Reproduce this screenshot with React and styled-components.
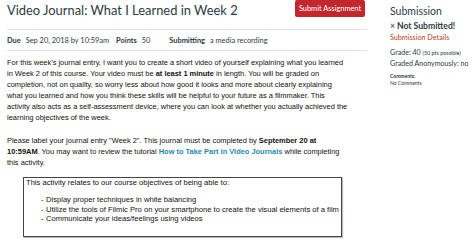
import React from 'react';
import styled, { createGlobalStyle } from 'styled-components';

const GlobalStyle = createGlobalStyle`
	* { box-sizing: border-box; }
	body {
		margin: 0;
		background: #fff;
		font-family: Lato, "Liberation Sans", sans-serif;
		color: #2d3b45;
	}
`;

/**
 * Page frame: assignment column + submission sidebar
 */
const Page = styled.div`
	display: flex;
	width: 474px;
	height: 241px;
	overflow: hidden;
`;

const Main = styled.main`
	width: 367px;
	padding-left: 7px;
	flex-shrink: 0;
`;

const Header = styled.header`
	display: flex;
	justify-content: space-between;
	align-items: flex-start;
	height: 30px;
	border-bottom: 1px solid #dfe3e6;
`;

const Title = styled.h1`
	margin: 0;
	font-size: 12.9px;
	font-weight: 400;
	line-height: 20px;
	white-space: nowrap;
`;

const SubmitButton = styled.button`
	margin-right: 2px;
	width: 70px;
	height: 17px;
	padding: 0;
	border: none;
	border-radius: 2px;
	background: #c4262e;
	color: #fff;
	font-family: Lato, sans-serif;
	font-size: 7.4px;
	line-height: 17px;
`;

const Meta = styled.div`
	display: flex;
	align-items: center;
	height: 21px;
	border-bottom: 1px solid #dfe3e6;
	font-size: 7.4px;
`;

const MetaItem = styled.span`
	margin-right: ${props => props.gap}px;
	white-space: nowrap;
`;

const Label = styled.b`
	font-weight: 700;
	margin-right: 5px;
`;

const Body = styled.section`
	width: 380px;
	padding-top: 5.5px;
	font-family: "Liberation Sans", Arial, sans-serif;
	font-size: 7.45px;
	line-height: 11px;
	color: #111;
	white-space: nowrap;
`;

const Para = styled.p`
	margin: 0 0 ${props => props.after}px;
`;

const Link = styled.a`
	color: #1f8ab5;
	font-weight: 700;
	text-decoration: none;
`;

const Objectives = styled.div`
	margin-left: 16px;
	width: 319px;
	padding: 0 2px 12px;
	border: 1px solid #444;
	box-shadow: 1px 1px 1px #bbb;
	font-size: 7.6px;
	line-height: 9.8px;
`;

const List = styled.ul`
	margin: 7.4px 0 0;
	padding-left: 20px;
	list-style: none;
	line-height: 9.6px;
`;

const Item = styled.li`
	&::before {
		content: "-";
		display: inline-block;
		width: 5px;
		margin-left: -5px;
	}
`;

const Sidebar = styled.aside`
	padding: 3px 0 0 23px;
	width: 107px;
	font-size: 7.1px;
	white-space: nowrap;
`;

const SideTitle = styled.h2`
	margin: 0;
	font-size: 10.5px;
	font-weight: 400;
	line-height: 16px;
`;

const Status = styled.div`
	font-size: 8.6px;
	font-weight: 700;
	line-height: 12px;
	margin-top: 1px;
`;

const Cross = styled.span`
	font-weight: 400;
	margin-right: 2px;
`;

const Details = styled.div`
	color: #c23c2d;
	font-size: 7.2px;
	line-height: 11px;
	margin-bottom: 5px;
`;

const Line = styled.div`
	line-height: 9.5px;
	font-size: ${props => props.size || 7.1}px;
`;

const Small = styled.span`
	font-size: 5.4px;
`;

const Comments = styled.div`
	margin-top: 5px;
	font-size: 5px;
	line-height: 7px;
`;

export default function App() {
	return (
		<>
			<GlobalStyle />
			<Page>
				<Main>
					<Header>
						<Title>Video Journal: What I Learned in Week 2</Title>
						<SubmitButton>Submit Assignment</SubmitButton>
					</Header>
					<Meta>
						<MetaItem gap={7}><Label>Due</Label>Sep 20, 2018 by 10:59am</MetaItem>
						<MetaItem gap={19}><Label>Points</Label>50</MetaItem>
						<MetaItem gap={0}><Label>Submitting</Label>a media recording</MetaItem>
					</Meta>
					<Body>
						<Para after={12}>
							For this week's journal entry, I want you to create a short video of yourself explaining what you learned<br />
							in Week 2 of this course. Your video must be <b>at least 1 minute</b> in length. You will be graded on<br />
							completion, not on quality, so worry less about how good it looks and more about clearly explaining<br />
							what you learned and how you think these skills will be helpful to your future as a filmmaker. This<br />
							activity also acts as a self-assessment device, where you can look at whether you actually achieved the<br />
							learning objectives of the week.
						</Para>
						<Para after={9.5}>
							Please label your journal entry "Week 2". This journal must be completed by <b>September 20 at</b><br />
							<b>10:59AM</b>. You may want to review the tutorial <Link href="#">How to Take Part in Video Journals</Link> while completing<br />
							this activity.
						</Para>
						<Objectives>
							This activity relates to our course objectives of being able to:
							<List>
								<Item>Display proper techniques in white balancing</Item>
								<Item>Utilize the tools of Filmic Pro on your smartphone to create the visual elements of a film</Item>
								<Item>Communicate your ideas/feelings using videos</Item>
							</List>
						</Objectives>
					</Body>
				</Main>
				<Sidebar>
					<SideTitle>Submission</SideTitle>
					<Status><Cross>×</Cross>Not Submitted!</Status>
					<Details>Submission Details</Details>
					<Line>Grade: 40 <Small>(50 pts possible)</Small></Line>
					<Line>Graded Anonymously: no</Line>
					<Comments>
						<b>Comments:</b>
						<div>No Comments</div>
					</Comments>
				</Sidebar>
			</Page>
		</>
	);
}
